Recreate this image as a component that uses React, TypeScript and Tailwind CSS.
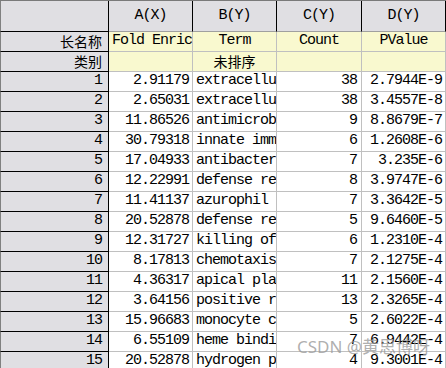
import React from 'react';

interface DataRow {
  fold: string;
  term: string;
  count: string;
  pvalue: string;
}

const rows: DataRow[] = [
  { fold: '2.91179', term: 'extracellu', count: '38', pvalue: '2.7944E-9' },
  { fold: '2.65031', term: 'extracellu', count: '38', pvalue: '3.4557E-8' },
  { fold: '11.86526', term: 'antimicrob', count: '9', pvalue: '8.8679E-7' },
  { fold: '30.79318', term: 'innate imm', count: '6', pvalue: '1.2608E-6' },
  { fold: '17.04933', term: 'antibacter', count: '7', pvalue: '3.235E-6' },
  { fold: '12.22991', term: 'defense re', count: '8', pvalue: '3.9747E-6' },
  { fold: '11.41137', term: 'azurophil', count: '7', pvalue: '3.3642E-5' },
  { fold: '20.52878', term: 'defense re', count: '5', pvalue: '9.6460E-5' },
  { fold: '12.31727', term: 'killing of', count: '6', pvalue: '1.2310E-4' },
  { fold: '8.17813', term: 'chemotaxis', count: '7', pvalue: '2.1275E-4' },
  { fold: '4.36317', term: 'apical pla', count: '11', pvalue: '2.1560E-4' },
  { fold: '3.64156', term: 'positive r', count: '13', pvalue: '2.3265E-4' },
  { fold: '15.96683', term: 'monocyte c', count: '5', pvalue: '2.6022E-4' },
  { fold: '6.55109', term: 'heme bindi', count: '7', pvalue: '6.9442E-4' },
  { fold: '20.52878', term: 'hydrogen p', count: '4', pvalue: '9.3001E-4' },
];

const mono = "font-['Liberation_Mono','Noto_Sans_CJK_SC',monospace] text-[15px] tracking-[-1px]";
const cjk = "font-['Noto_Sans_CJK_SC',sans-serif] text-[14px]";

// row label cell on the left, gray with dark lines
const RowHead = ({ children, className = '' }: { children?: React.ReactNode; className?: string }) => (
  <div
    className={`w-[109px] shrink-0 flex items-center justify-end pr-[6px] bg-[#e0dfe3] border-l border-l-[#808080] border-r border-r-black border-b border-b-black ${className}`}
  >
    {children}
  </div>
);

const Cell = ({
  w,
  bg = 'bg-white',
  align = 'justify-end',
  children,
  className = '',
}: {
  w: string;
  bg?: string;
  align?: string;
  children?: React.ReactNode;
  className?: string;
}) => (
  <div
    className={`${w} shrink-0 flex items-center ${align} overflow-hidden whitespace-nowrap ${bg} border-r border-b border-[#c0c0c0] ${className}`}
  >
    {children}
  </div>
);

export default function App() {
  return (
    <div className="relative w-[446px] h-[368px] overflow-hidden bg-white text-black">
      <div className="border-t border-t-[#7a7a7a]">
        {/* column header row */}
        <div className="flex h-[31px]">
          <RowHead />
          {['A(X)', 'B(Y)', 'C(Y)', 'D(Y)'].map((label, i) => (
            <div
              key={label}
              className={`${i === 2 ? 'w-[85px]' : 'w-[84px]'} shrink-0 flex items-center justify-center bg-[#e0dfe3] border-r border-r-black border-b border-b-[#a0a0a0] ${mono}`}
            >
              {label}
            </div>
          ))}
        </div>

        {/* long name row */}
        <div className="flex h-[20px]">
          <RowHead>
            <span className={cjk}>长名称</span>
          </RowHead>
          <Cell w="w-[84px]" bg="bg-[#f9f9cf]" align="justify-start" className={`pl-[3px] ${mono}`}>
            Fold Enric
          </Cell>
          <Cell w="w-[84px]" bg="bg-[#f9f9cf]" align="justify-center" className={mono}>
            Term
          </Cell>
          <Cell w="w-[85px]" bg="bg-[#f9f9cf]" align="justify-center" className={mono}>
            Count
          </Cell>
          <Cell w="w-[84px]" bg="bg-[#f9f9cf]" align="justify-center" className={mono}>
            PValue
          </Cell>
        </div>

        {/* category row */}
        <div className="flex h-[20px]">
          <RowHead>
            <span className={cjk}>类别</span>
          </RowHead>
          <Cell w="w-[84px]" bg="bg-[#f9f9cf]" />
          <Cell w="w-[84px]" bg="bg-[#f9f9cf]" align="justify-center" className={cjk}>
            未排序
          </Cell>
          <Cell w="w-[85px]" bg="bg-[#f9f9cf]" />
          <Cell w="w-[84px]" bg="bg-[#f9f9cf]" />
        </div>

        {rows.map((r, i) => (
          <div key={i} className="flex h-[20px]">
            <RowHead>
              <span className={mono}>{i + 1}</span>
            </RowHead>
            <Cell w="w-[84px]" className={`pr-[3px] ${mono}`}>
              {r.fold}
            </Cell>
            <Cell w="w-[84px]" align="justify-start" className={`pl-[3px] ${mono}`}>
              {r.term}
            </Cell>
            <Cell w="w-[85px]" className={`pr-[4px] ${mono}`}>
              {r.count}
            </Cell>
            <Cell w="w-[84px]" className={`pr-[3px] ${mono}`}>
              {r.pvalue}
            </Cell>
          </div>
        ))}
      </div>

      {/* watermark */}
      <div className="absolute left-[297px] top-[338px] font-['Noto_Sans','Noto_Sans_CJK_SC',sans-serif] text-[17px] leading-none text-[#9a9a9a]/80 whitespace-nowrap">
        CSDN @黄思博呀
      </div>
    </div>
  );
}
